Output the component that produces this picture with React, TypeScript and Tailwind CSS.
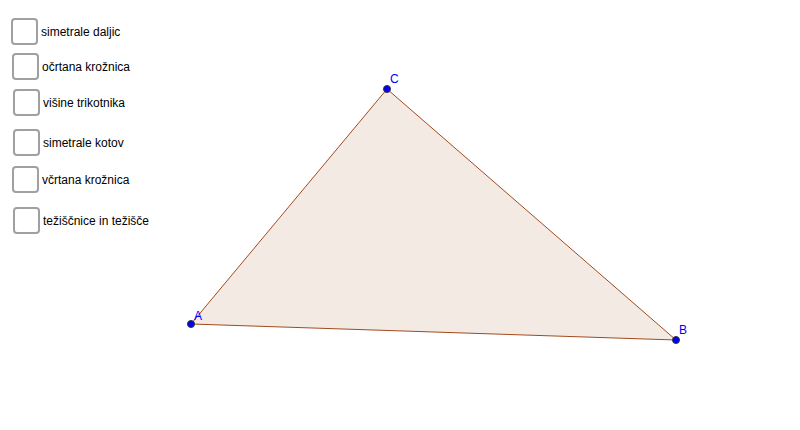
import React from "react";

const items = [
  { label: "simetrale daljic", cls: "mt-[18px] ml-[11px]" },
  { label: "očrtana krožnica", cls: "mt-[8px] ml-[12px]" },
  { label: "višine trikotnika", cls: "mt-[9px] ml-[13px]" },
  { label: "simetrale kotov", cls: "mt-[13px] ml-[13px]" },
  { label: "včrtana krožnica", cls: "mt-[10px] ml-[12px]" },
  { label: "težiščnice in težišče", cls: "mt-[14px] ml-[13px]" },
];

export default function App() {
  return (
    <div className="relative w-[800px] h-[430px] bg-white overflow-hidden" style={{ fontFamily: '"Liberation Sans", Arial, sans-serif' }}>
      <svg className="absolute left-0 top-0" width="800" height="430" viewBox="0 0 800 430">
        <polygon points="191,324 676,340 387,89" fill="#f4eae4" stroke="#a04a1e" strokeWidth="1" />
        <circle cx="191" cy="324" r="3.5" fill="#0000ff" stroke="#333" strokeWidth="1" />
        <circle cx="676" cy="340" r="3.5" fill="#0000ff" stroke="#333" strokeWidth="1" />
        <circle cx="387" cy="89" r="3.5" fill="#0000ff" stroke="#333" strokeWidth="1" />
        <text x="194" y="320" fill="#0000ff" fontSize="12" fontFamily="Liberation Sans, Arial, sans-serif">A</text>
        <text x="679" y="334" fill="#0000ff" fontSize="12" fontFamily="Liberation Sans, Arial, sans-serif">B</text>
        <text x="390" y="83" fill="#0000ff" fontSize="12" fontFamily="Liberation Sans, Arial, sans-serif">C</text>
      </svg>
      <div className="relative flex flex-col">
        {items.map((it) => (
          <div key={it.label} className={`flex items-center ${it.cls}`}>
            <div className="w-[27px] h-[27px] border-2 border-[#a0a0a0] rounded-[4px] bg-white" />
            <span className="ml-[3px] text-[12px] text-black leading-none">{it.label}</span>
          </div>
        ))}
      </div>
    </div>
  );
}
